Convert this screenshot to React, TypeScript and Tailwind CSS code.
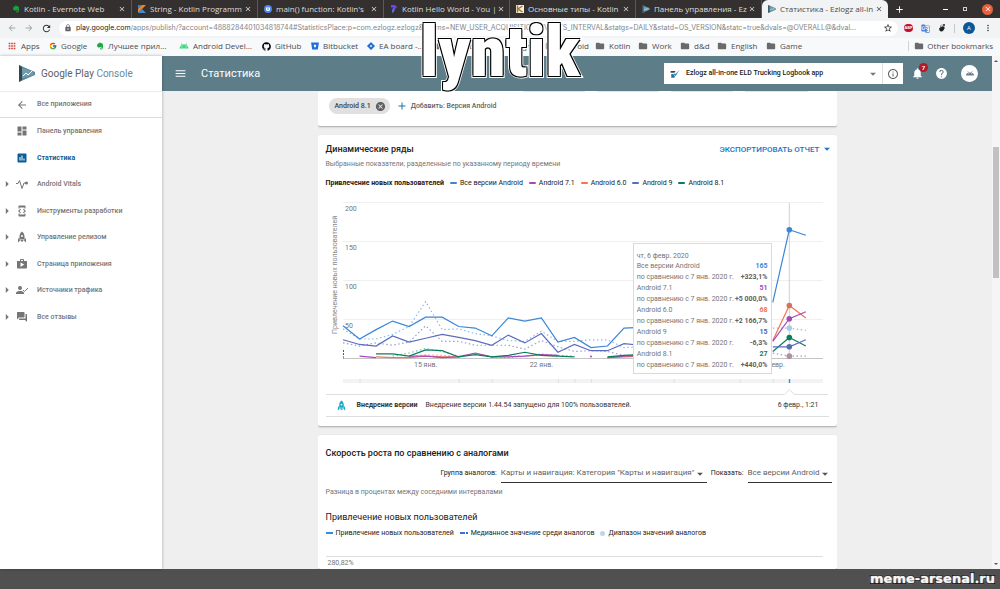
import React from 'react';
import {
  MdAdd, MdAndroid, MdArrowBack, MdArrowDropDown, MdArrowForward, MdArrowRight, MdAssessment, MdCancel, MdClose,
  MdDashboard, MdDeveloperMode, MdFolder, MdForum, MdHelp, MdInfoOutline, MdLock, MdMenu, MdMoreVert,
  MdNotifications, MdRefresh, MdShop, MdStarBorder, MdGTranslate, MdApps,
} from 'react-icons/md';
import { FcGoogle } from 'react-icons/fc';
import { FaBitbucket, FaEvernote, FaGithub, FaJira } from 'react-icons/fa';

const KotlinIcon = () => (
  <svg viewBox="0 0 16 16" className="size-2">
    <path d="M0 0h8L0 8z" fill="#1e88e5" />
    <path d="M8 0h8L0 16V8z" fill="#f58220" />
    <path d="M0 16l8-8 8 8z" fill="#3d8fd8" />
  </svg>
);

const PlayConsoleIcon = ({ className }: { className: string }) => (
  <svg viewBox="0 0 16 17" className={className}>
    <path d="M0 0l16 7v3L0 17z" fill="#5f8a9c" />
    <path d="M0 0l3 2v13l-3 2z" fill="#37474f" />
    <path d="M3 3l11 4v3L3 13z" fill="#6f9db0" />
    <path d="M4 11l3-3 2 2 4-4" fill="none" stroke="#fff" strokeWidth="1" />
  </svg>
);

const RocketIcon = ({ className }: { className: string }) => (
  <svg viewBox="0 0 24 24" className={className} fill="currentColor">
    <path fillRule="evenodd" d="M12 1c-4 3-5 7-5 10v6h10v-6c0-3-1-7-5-10zm0 7a2 2 0 1 1 0 4 2 2 0 0 1 0-4z" />
    <path d="M6 13l-2 4v6l4-4zM18 13l2 4v6l-4-4zM9 18h6l-1 3h-4z" />
  </svg>
);

const VitalsIcon = ({ className }: { className: string }) => (
  <svg viewBox="0 0 24 24" className={className} fill="none" stroke="currentColor" strokeWidth="2">
    <path d="M0 11h4l3-6 5 16 4-11h5" />
    <circle cx="21" cy="10" r="3" fill="currentColor" stroke="none" />
  </svg>
);

const TrafficIcon = ({ className }: { className: string }) => (
  <svg viewBox="0 0 24 24" className={className} fill="currentColor">
    <circle cx="8" cy="8" r="4" />
    <path d="M0 20v-2c0-3 5-4 8-4s8 1 8 4v2z" />
    <path d="M14 12l3 3 7-7" fill="none" stroke="currentColor" strokeWidth="2" />
  </svg>
);

const EzlogzIcon = ({ className }: { className: string }) => (
  <svg viewBox="0 0 16 16" className={className}>
    <path d="M1 3h8L7 6H1z" fill="#37474f" />
    <path d="M15 1L9 11 5 8l3-1 1 1z" fill="#1e88a8" />
    <path d="M2 8h3l3 4-1 2H2z" fill="#2b6f9e" />
  </svg>
);

const tabs = [
  { title: 'Kotlin - Evernote Web', icon: <FaEvernote className="size-2 text-[#14a83b]" /> },
  { title: 'String - Kotlin Programm', icon: <KotlinIcon /> },
  {
    title: "main() function: Kotlin's",
    icon: (
      <svg viewBox="0 0 16 16" className="size-2">
        <circle cx="8" cy="8" r="8" fill="#4b86f0" />
        <path d="M4 5h8v4a4 3 0 0 1-8 0z" fill="#fff" />
        <path d="M6 8h4" stroke="#4b86f0" strokeWidth="2" />
      </svg>
    ),
  },
  {
    title: 'Kotlin Hello World - You |',
    icon: (
      <svg viewBox="0 0 16 16" className="size-2">
        <path d="M2 0h8l4 4-4 4H7V5H2z" fill="#7b3ff2" />
        <path d="M5 7h4v4l-3 5-2-2z" fill="#4f7cf5" />
      </svg>
    ),
  },
  {
    title: 'Основные типы - Kotlin',
    icon: (
      <svg viewBox="0 0 16 16" className="size-2">
        <path d="M0 0h16v16H0z" fill="#f5efdc" />
        <path d="M3 1v14M13 2L4 8l9 6" fill="none" stroke="#a07a35" strokeWidth="3" />
      </svg>
    ),
  },
  { title: 'Панель управления - Ez', icon: <PlayConsoleIcon className="size-2" /> },
  { title: 'Статистика - Ezlogz all-in', icon: <PlayConsoleIcon className="size-2" />, active: true },
];

const folder = <MdFolder className="size-[10px] text-[#6a6a6a]" />;

const bookmarks = [
  { label: 'Apps', icon: <MdApps className="size-[10px] text-[#d0463b]" />, width: 'w-[42px]' },
  { label: 'Google', icon: <FcGoogle className="size-2" />, width: 'w-[47px]' },
  { label: 'Лучшее прил…', icon: <FaEvernote className="size-2 text-[#14a83b]" />, width: 'w-[83px]' },
  { label: 'Android Devel…', icon: <MdAndroid className="size-[10px] text-[#3ddc84]" />, width: 'w-[83px]' },
  { label: 'GitHub', icon: <FaGithub className="size-[9px] text-black" />, width: 'w-[49px]' },
  { label: 'Bitbucket', icon: <FaBitbucket className="size-2 text-[#1f6fdb]" />, width: 'w-[56px]' },
  { label: 'EA board -…', icon: <FaJira className="size-2 text-[#1f6fdb]" />, width: 'w-[65px]' },
  { label: 'Projects', icon: folder, width: 'w-[60px]' },
  { label: 'Design', icon: folder, width: 'w-[53px]' },
  { label: 'Android', icon: folder, width: 'w-[50px]' },
  { label: 'Kotlin', icon: folder, width: 'w-[43px]' },
  { label: 'Work', icon: folder, width: 'w-[42px]' },
  { label: 'd&d', icon: folder, width: 'w-[37px]' },
  { label: 'English', icon: folder, width: 'w-[49px]' },
  { label: 'Game', icon: folder, width: 'w-[40px]' },
];

const navItems = [
  { label: 'Панель управления', Icon: MdDashboard },
  { label: 'Статистика', Icon: MdAssessment, active: true },
  { label: 'Android Vitals', Icon: VitalsIcon, nested: true },
  { label: 'Инструменты разработки', Icon: MdDeveloperMode, nested: true },
  { label: 'Управление релизом', Icon: RocketIcon, nested: true },
  { label: 'Страница приложения', Icon: MdShop, nested: true },
  { label: 'Источники трафика', Icon: TrafficIcon, nested: true },
  { label: 'Все отзывы', Icon: MdForum, nested: true },
];

const legend = [
  { label: 'Все версии Android', color: 'bg-[#3b86d6]' },
  { label: 'Android 7.1', color: 'bg-[#ab47bc]' },
  { label: 'Android 6.0', color: 'bg-[#f4754f]' },
  { label: 'Android 9', color: 'bg-[#5c6bc0]' },
  { label: 'Android 8.1', color: 'bg-[#0b7d5f]' },
];

const tooltipRows = [
  { label: 'Все версии Android', value: '165', change: '+323,1%', color: 'text-[#3b86d6]' },
  { label: 'Android 7.1', value: '51', change: '+5 000,0%', color: 'text-[#ab47bc]' },
  { label: 'Android 6.0', value: '68', change: '+2 166,7%', color: 'text-[#f4754f]' },
  { label: 'Android 9', value: '15', change: '-6,3%', color: 'text-[#4a69a8]' },
  { label: 'Android 8.1', value: '27', change: '+440,0%', color: 'text-[#0b7d5f]' },
];

// start = day index of the first value, days are counted from 10 January
const series = [
  { start: 0, color: '#8dbdea', dotted: true, values: [38, 25, 25, 31, 41, 73, 37, 38, 32, 29, 23, 22, 35, 22, 22, 24, 24, 14, 15] },
  { start: 0, color: '#9a9fd0', dotted: true, values: [20, 16, 20, 17, 21, 42, 22, 22, 17, 17, 17, 12, 23, 15, 9, 10, 9, 4, 5] },
  { start: 3, color: '#7dbfae', dotted: true, values: [3, 7, 13, 9, 3, 6, 2, 3, 3, 6, 4, 3] },
  { start: 3, color: '#f5a98f', dotted: true, values: [1, 2, 5, 4, 3, 6, 2, 1, 3, 4, 2] },
  { start: 26, color: '#8dbdea', dotted: true, values: [39, 39, 36] },
  { start: 26, color: '#9a9fd0', dotted: true, values: [7, 3, 3] },
  { start: 2, color: '#f4754f', values: [2, 1, 1, 3, 2, 2] },
  { start: 1, color: '#ab47bc', values: [3, 1] },
  { start: 4, color: '#ab47bc', values: [3, 3, 1, 2, 7, 2, 2, 3, 5, 4] },
  { start: 2, color: '#0b7d5f', values: [6, 6, 3, 11, 10, 2, 5, 2, 4, 8, 4, 3, 2] },
  { start: 16, color: '#f4754f', values: [1, 2, 3] },
  { start: 16, color: '#ab47bc', values: [1, 3, 4] },
  { start: 16, color: '#0b7d5f', values: [2, 4, 5] },
  { start: 0, color: '#5c6bc0', values: [24, 18, 16, 29, 21, 26, 31, 27, 23, 17, 30, 20, 32, 8, 18, 10, 10, 19, 17] },
  { start: 0, color: '#3b86d6', values: [42, 25, 37, 48, 41, 53, 53, 41, 39, 29, 52, 48, 52, 21, 27, 14, 16, 39, 40] },
  { start: 26, color: '#0b7d5f', values: [9, 27, 16] },
  { start: 26, color: '#5c6bc0', values: [15, 15, 24] },
  { start: 26, color: '#f4754f', values: [23, 68, 52] },
  { start: 26, color: '#ab47bc', values: [22, 51, 60] },
  { start: 26, color: '#3b86d6', values: [72, 165, 158] },
];

const markers = [
  { value: 165, color: '#3b86d6' },
  { value: 68, color: '#d9705a' },
  { value: 51, color: '#9a4fb0' },
  { value: 39, color: '#a9cbe8' },
  { value: 27, color: '#0b7d5f' },
  { value: 15, color: '#5c6bb0' },
  { value: 3, color: '#b08fa0' },
];

const dayX = (day: number) => 25 + day * 16.53;
const valueY = (value: number) => 160.5 - value * 0.78;

const Chart = () => (
  <svg viewBox="0 0 519 197" className="block w-full font-[Roboto,sans-serif]">
    {[0, 50, 100, 150, 200].map((v) => (
      <line key={v} x1="25" x2="505" y1={valueY(v)} y2={valueY(v)} stroke={v === 0 ? '#c4c4c4' : '#efefef'} />
    ))}
    {[50, 100, 150, 200].map((v) => (
      <text key={v} x="27" y={valueY(v) + 8} fontSize="7" fill="#757575">{v}</text>
    ))}
    <text transform="translate(19 136) rotate(-90)" fontSize="7" fill="#8a8a8a">Привлечение новых пользователей</text>
    <line x1={dayX(27)} x2={dayX(27)} y1="5" y2="161" stroke="#cfcfcf" />
    {series.map((s, i) => (
      <polyline
        key={i}
        points={s.values.map((v, n) => `${dayX(s.start + n)},${valueY(v)}`).join(' ')}
        fill="none"
        stroke={s.color}
        strokeWidth="1.2"
        strokeDasharray={s.dotted ? '1.5 2.5' : undefined}
      />
    ))}
    <path d="M25.500 152v6" stroke="#0b7d5f" strokeDasharray="2 1" />
    <path d="M25.500 158v3" stroke="#f4754f" />
    <circle cx={dayX(15)} cy="158.5" r="1" fill="#ab47bc" />
    {markers.map((m) => (
      <circle key={m.value} cx={dayX(27)} cy={valueY(m.value)} r="2.8" fill={m.color} />
    ))}
    {[[5, '15 янв.'], [12, '22 янв.'], [26, '5 февр.']].map(([day, label]) => (
      <text key={label} x={dayX(Number(day))} y="169" fontSize="7" fill="#757575" textAnchor="middle">{label}</text>
    ))}
    <rect x="25" y="181" width="480" height="4" fill="#f3f3f3" />
    {[1, 7, 9, 13, 14, 15, 20, 24, 26].map((day) => (
      <rect key={day} x={dayX(day)} y="181" width="1" height="4" fill="#d3e6e4" />
    ))}
    <rect x="470.800" y="181" width="1.400" height="4" fill="#12a5dc" />
    <path d={`M8 196.500H${dayX(27) - 5}l5 -5l5 5H510`} fill="none" stroke="#dedede" />
  </svg>
);

const Browser = () => (
  <div className="font-['Open_Sans','Noto_Sans',sans-serif] text-[8px] leading-[10px]">
    <div className="flex h-[18px] items-stretch bg-[#33302f] pl-[6px] text-[#dedede]">
      {tabs.map((tab) => (
        <div
          key={tab.title}
          className={`flex w-[126px] min-w-0 shrink-0 items-center pr-[5px] pl-[6px] ${
            tab.active ? 'rounded-t-md bg-[#f1f3f4] text-[#4a4a4a]' : 'border-r border-[#5c5957]'
          }`}
        >
          <span className="mr-1 shrink-0">{tab.icon}</span>
          <span className="flex-1 whitespace-nowrap">{tab.title}</span>
          <button type="button" aria-label="Закрыть вкладку"><MdClose className="size-2" /></button>
        </div>
      ))}
      <button type="button" aria-label="Новая вкладка" className="ml-[6px] text-white"><MdAdd className="size-[11px]" /></button>
      <div className="ml-auto flex items-center gap-[15px] pr-[7px] text-white">
        <button type="button" aria-label="Свернуть" className="h-px w-[5px] bg-white" />
        <button type="button" aria-label="Развернуть" className="size-[4px] border border-[#cfcfcf]" />
        <button type="button" aria-label="Закрыть" className="flex size-[11px] items-center justify-center rounded-full bg-[#e9603a]">
          <MdClose className="size-2" />
        </button>
      </div>
    </div>

    <div className="flex h-[20px] items-center bg-[#f1f3f4] pl-[7px] text-[#5f6368]">
      <button type="button" aria-label="Назад" className="mr-[7px] text-[#a6a6a6]"><MdArrowBack className="size-[10px]" /></button>
      <button type="button" aria-label="Вперёд" className="mr-[7px] text-[#a6a6a6]"><MdArrowForward className="size-[10px]" /></button>
      <button type="button" aria-label="Обновить" className="mr-[7px] text-[#333]"><MdRefresh className="size-[11px]" /></button>
      <div className="flex h-[15px] min-w-0 flex-1 items-center rounded-full bg-white px-[5px] font-[Inter,sans-serif] text-[7px]">
        <MdLock className="mr-1 size-2 shrink-0" />
        <label htmlFor="address" className="text-[#222]">play.google.com</label>
        <input
          id="address"
          className="min-w-0 flex-1 text-[#80868b] outline-none"
          defaultValue="/apps/publish/?account=4888284401034818744#StatisticsPlace:p=com.ezlogz.ezlogz&statms=NEW_USER_ACQUISITION_EVENTS_INTERVAL&statgs=DAILY&statd=OS_VERSION&statc=true&dvals=@OVERALL@&dval…"
        />
        <button type="button" aria-label="Добавить закладку" className="ml-1 text-[#333]"><MdStarBorder className="size-[10px]" /></button>
      </div>
      <div className="flex items-center gap-2 pr-[7px] pl-[6px]">
        <span className="flex h-[8px] w-[9px] items-center justify-center rounded-full bg-[#c70d2c] text-[4px] font-bold text-white">ABP</span>
        <MdGTranslate className="size-[9px] text-[#4a80d9]" />
        <svg viewBox="0 0 16 16" className="size-2">
          <path d="M8 5c4-1 6 1 5 4s-4 7-7 6-5-5-3-7 3-2 5-3z" fill="#222" />
          <circle cx="12" cy="2" r="2" fill="#222" /><circle cx="8" cy="2" r="1" fill="#222" /><circle cx="5" cy="4" r="1" fill="#222" />
        </svg>
        <span className="h-[9px] w-px bg-[#c4c7c9]" />
        <button type="button" className="flex size-[12px] items-center justify-center rounded-full bg-[#0b5797] text-[6px] text-white">A</button>
        <button type="button" aria-label="Меню" className="text-[#333]"><MdMoreVert className="size-[10px]" /></button>
      </div>
    </div>

    <div className="flex h-[18px] items-center bg-[#f8f9fa] pb-[2px] pl-[7px] text-[#4a4d50]">
      {bookmarks.map((b) => (
        <a key={b.label} href="#" className={`flex items-center gap-1 whitespace-nowrap ${b.width}`}>
          <span className="shrink-0">{b.icon}</span>
          {b.label}
        </a>
      ))}
      <a href="#" className="ml-auto flex items-center gap-[3px] border-l border-[#cfd1d3] pr-[7px] pl-[5px] whitespace-nowrap">
        {folder}Other bookmarks
      </a>
    </div>
  </div>
);

const Sidebar = () => (
  <aside className="z-10 flex w-[162px] shrink-0 flex-col bg-white text-[7px] font-medium text-[#757575] shadow-[0_0_3px_rgba(0,0,0,0.3)]">
    <div className="flex h-[35px] items-center gap-[6px] pl-[19px]">
      <PlayConsoleIcon className="h-[17px] w-4" />
      <span className="text-[10px] leading-[14px] font-normal text-[#616161]">Google Play <span className="text-[#6b8a98]">Console</span></span>
    </div>
    <a href="#" className="flex h-[27px] items-center gap-[9px] border-y border-t-[#ececec] border-b-[#dcdcdc] pl-4">
      <MdArrowBack className="size-3" />Все приложения
    </a>
    <nav className="grid h-[212px] auto-rows-fr">
      {navItems.map(({ label, Icon, active, nested }) => (
        <a key={label} href="#" className={`flex items-center ${active ? 'font-bold text-[#0b5f97]' : ''}`}>
          <span className="w-4">{nested && <MdArrowRight className="size-[14px]" />}</span>
          <Icon className="mr-[9px] size-3" />
          {label}
        </a>
      ))}
    </nav>
  </aside>
);

const Header = () => (
  <header className="flex h-[35px] shrink-0 items-center bg-[#5d7d89] pr-[14px] pl-3 text-white">
    <button type="button" aria-label="Меню"><MdMenu className="size-[13px]" /></button>
    <h1 className="ml-[14px] text-[11px] leading-[14px]">Статистика</h1>
    <div className="ml-auto flex h-[21px] w-[239px] items-center bg-white text-[7px] font-medium text-[#212121]">
      <EzlogzIcon className="mx-[6px] size-[10px]" />
      <button type="button" className="flex flex-1 items-center justify-between">
        Ezlogz all-in-one ELD Trucking Logbook app
        <MdArrowDropDown className="mr-[2px] size-[14px] text-[#757575]" />
      </button>
      <button type="button" aria-label="Сведения" className="flex h-full items-center border-l border-[#e0e0e0] px-1 text-[#616161]">
        <MdInfoOutline className="size-3" />
      </button>
    </div>
    <button type="button" aria-label="Уведомления" className="relative ml-2">
      <MdNotifications className="size-[13px]" />
      <span className="absolute -top-1 left-2 flex size-[9px] items-center justify-center rounded-full bg-[#b3172a] text-[6px] font-bold">7</span>
    </button>
    <button type="button" aria-label="Справка" className="ml-[11px]"><MdHelp className="size-[13px]" /></button>
    <button type="button" aria-label="Аккаунт" className="ml-[13px] flex size-[17px] items-center justify-center rounded-full bg-white">
      <svg viewBox="0 0 16 10" className="w-2" fill="#6e7f86">
        <path fillRule="evenodd" d="M0 9a8 6 0 0 1 16 0zM4 6h2V5H4zm6 0h2V5h-2z" />
        <path d="M3 0l3 4M13 0l-3 4" stroke="#6e7f86" />
      </svg>
    </button>
  </header>
);

const card = 'rounded-[2px] bg-white shadow-[0_1px_2px_rgba(0,0,0,0.3)]';

const TimeSeriesCard = () => (
  <section className={`${card} shrink-0 pb-[9px]`}>
    <div className="flex items-center justify-between pt-[7px] pr-[3px] pl-2">
      <h2 className="text-[9px] leading-[12px] font-medium">Динамические ряды</h2>
      <button type="button" className="flex items-center text-[8px] leading-[13px] font-medium text-[#1976c5]">
        ЭКСПОРТИРОВАТЬ ОТЧЕТ<MdArrowDropDown className="size-[14px]" />
      </button>
    </div>
    <p className="px-2 pt-[3px] text-[7px] leading-[10px] text-[#757575]">Выбранные показатели, разделенные по указанному периоду времени</p>
    <div className="flex items-center gap-[6px] px-2 pt-[9px] pb-[10px] text-[7px] leading-[10px]">
      <strong className="font-bold">Привлечение новых пользователей</strong>
      {legend.map((l) => (
        <span key={l.label} className="flex items-center gap-[3px]">
          <span className={`h-[2px] w-[7px] rounded-full ${l.color}`} />{l.label}
        </span>
      ))}
    </div>
    <div className="relative">
      <Chart />
      <div className="absolute top-[45px] right-[65px] border border-[#dadada] bg-white px-[3px] pt-2 pb-[2px] text-[7px] leading-[11px] whitespace-nowrap text-[#757575]">
        <p className="leading-[9px]">чт, 6 февр. 2020</p>
        <table className="w-full">
          <tbody>
            {tooltipRows.map((r) => (
              <React.Fragment key={r.label}>
                <tr><td>{r.label}</td><td className={`text-right font-bold ${r.color}`}>{r.value}</td></tr>
                <tr><td>по сравнению с 7 янв. 2020 г.</td><td className="pl-px text-right font-bold text-[#616161]">{r.change}</td></tr>
              </React.Fragment>
            ))}
          </tbody>
        </table>
      </div>
    </div>
    <div className="mx-2 flex h-[22px] items-center border-b border-[#dedede] px-[10px] text-[7px] text-[#333]">
      <RocketIcon className="mr-[10px] size-[11px] text-[#16a9c7]" />
      <strong className="mr-2 font-bold">Внедрение версии</strong>
      Внедрение версии 1.44.54 запущено для 100% пользователей.
      <span className="ml-auto">6 февр., 1:21</span>
    </div>
  </section>
);

const selectStyle = 'h-[19px] appearance-none border-b border-[#333] pr-3 text-[8px] leading-[14px] text-[#616161] outline-none';

const GrowthCard = () => (
  <section className={`${card} flex-1`}>
    <h2 className="px-2 pt-3 text-[9px] leading-[12px] font-medium">Скорость роста по сравнению с аналогами</h2>
    <div className="flex items-center justify-end gap-1 pt-[5px] pr-[5px] text-[7px]">
      <label htmlFor="peers">Группа аналогов:</label>
      <span className="flex items-center">
        <select id="peers" className={selectStyle}>
          <option>Карты и навигация: Категория "Карты и навигация"</option>
        </select>
        <MdArrowDropDown className="pointer-events-none -ml-[14px] size-[14px] text-[#555]" />
      </span>
      <label htmlFor="show">Показать:</label>
      <span className="flex items-center">
        <select id="show" className={selectStyle}>
          <option>Все версии Android</option>
        </select>
        <MdArrowDropDown className="pointer-events-none -ml-[14px] size-[14px] text-[#555]" />
      </span>
    </div>
    <p className="px-2 pt-1 text-[7px] leading-[10px] text-[#757575]">Разница в процентах между соседними интервалами</p>
    <h3 className="px-2 pt-[14px] text-[9px] leading-[12px]">Привлечение новых пользователей</h3>
    <div className="flex items-center gap-[6px] px-2 pt-1 text-[7px] leading-[12px]">
      <span className="flex items-center gap-[3px]"><span className="h-[2px] w-[7px] bg-[#2f8de4]" />Привлечение новых пользователей</span>
      <span className="flex items-center gap-[3px]">
        <span className="flex gap-px"><span className="h-[2px] w-[5px] bg-[#3b6fd6]" /><span className="size-[2px] bg-[#3b6fd6]" /></span>
        Медианное значение среди аналогов
      </span>
      <span className="flex items-center gap-[3px]"><span className="size-[5px] rounded-full bg-[#bcd6f2]" />Диапазон значений аналогов</span>
    </div>
    <div className="mt-[17px] mr-[14px] ml-2 border-t border-[#dedede] px-[2px] pt-[1px] text-[7px] leading-[10px] text-[#757575]">280,82%</div>
  </section>
);

export default function App() {
  return (
    <div className="relative flex h-screen flex-col overflow-hidden bg-[#505050] font-[Roboto,sans-serif] text-[#212121]">
      <Browser />
      <div className="flex min-h-0 flex-1 bg-[#efefef]">
        <Sidebar />
        <div className="flex min-w-0 flex-1 flex-col">
          <Header />
          <main className="mx-auto flex min-h-0 w-full max-w-[519px] flex-1 flex-col gap-[9px] overflow-hidden">
            <section className={`${card} flex h-[35px] shrink-0 flex-col px-[11px]`}>
              <div className="flex gap-3 pr-[18px] pl-[194px]">
                {[0, 1, 2, 3].map((n) => <span key={n} className="h-px flex-1 bg-[#dfe5e8]" />)}
              </div>
              <div className="flex items-center gap-[6px] pt-[6px] text-[7px] font-medium text-[#616161]">
                <span className="flex h-4 items-center gap-1 rounded-full bg-[#e0e0e0] pr-1 pl-[6px] text-[#424242]">
                  Android 8.1
                  <button type="button" aria-label="Удалить"><MdCancel className="size-[11px] text-[#616161]" /></button>
                </span>
                <button type="button" className="flex items-center gap-[3px]">
                  <MdAdd className="size-3 text-[#1976a5]" />Добавить: Версия Android
                </button>
              </div>
            </section>
            <TimeSeriesCard />
            <GrowthCard />
          </main>
        </div>
        <div className="flex w-2 flex-col items-center justify-between bg-[#f5f5f5] py-1">
          <svg viewBox="0 0 8 4" className="w-1" fill="#555"><path d="M0 4l4-4 4 4z" /></svg>
          <div className="mb-[200px] h-[131px] w-[6px] bg-[#c1c1c1]" />
          <svg viewBox="0 0 8 4" className="w-1" fill="#555"><path d="M0 0l4 4 4-4z" /></svg>
        </div>
      </div>
      <footer className="flex h-[20px] shrink-0 items-center justify-end pr-[5px] font-['DejaVu_Sans',sans-serif] text-[13px] leading-[20px] font-bold text-[#f5f5f5] [-webkit-text-stroke:2px_black] [paint-order:stroke_fill] [text-shadow:0_0_2px_white]">
        meme-arsenal.ru
      </footer>
      <p className="absolute inset-x-0 top-[14px] text-center font-['Roboto_Condensed','Roboto',sans-serif] text-[70px] leading-[76px] font-black text-white [-webkit-text-stroke:4px_white] [paint-order:stroke_fill] [text-shadow:1px_1px_0_#000,-1px_1px_0_#000,1px_-1px_0_#000,-1px_-1px_0_#000]">
        lyntik
      </p>
    </div>
  );
}
